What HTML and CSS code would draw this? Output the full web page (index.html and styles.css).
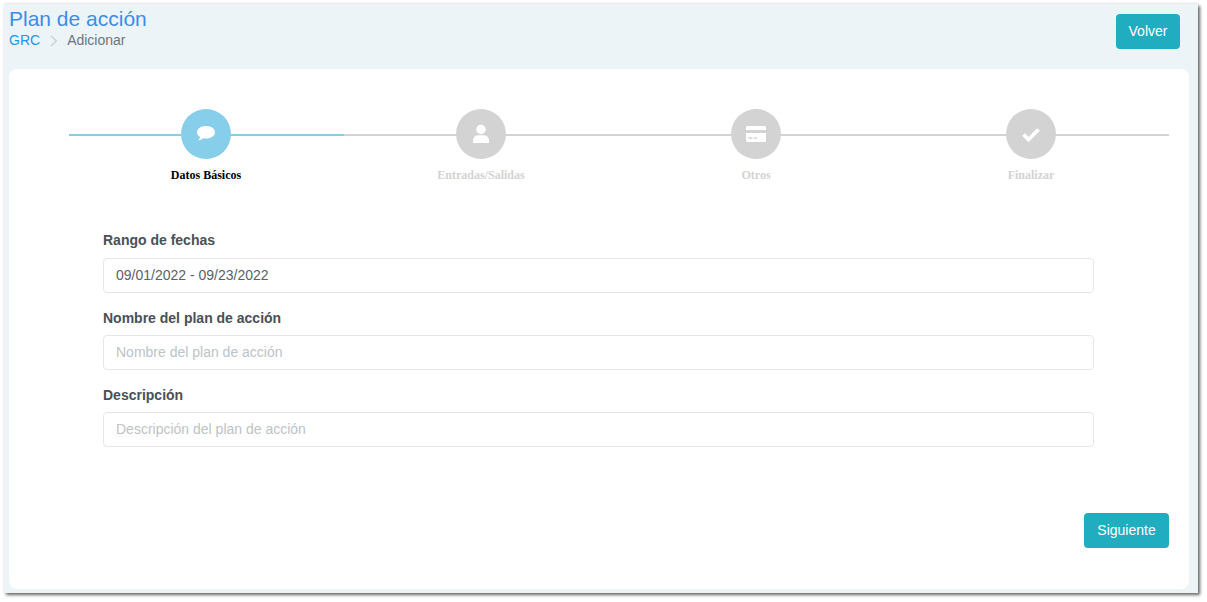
FILE: index.html
```html
<!DOCTYPE html>
<html lang="es">
<head>
<meta charset="utf-8">
<title>Plan de acción</title>
<link rel="stylesheet" href="styles.css">
</head>
<body>
<div class="shell">
  <header class="top">
    <div class="heading">
      <h1 class="title">Plan de acción</h1>
      <nav class="crumbs">
        <a class="crumb-link">GRC</a>
        <svg class="crumb-sep" width="8" height="12" viewBox="0 0 8 12"><path d="M1 1l5.500 5-5.500 5" fill="none" stroke="#c8ccd0" stroke-width="1.200"/></svg>
        <span class="crumb-current">Adicionar</span>
      </nav>
    </div>
    <button class="btn btn-back">Volver</button>
  </header>
  <main class="card">
    <ol class="stepper">
      <li class="step step-active">
        <span class="dot"><svg width="20" height="18" viewBox="0 0 20 18"><path d="M10 1C5 1 1 3.700 1 7.200c0 1.900 1.200 3.600 3.100 4.700-.3 1.300-1 2.400-2.100 3.300 2.100-.1 3.900-.8 5.300-2 .9.200 1.800.3 2.700.3 5 0 9-2.800 9-6.300S15 1 10 1z" fill="#fff"/></svg></span>
        <span class="step-label">Datos Básicos</span>
      </li>
      <li class="step">
        <span class="dot"><svg width="18" height="20" viewBox="0 0 18 20"><circle cx="9" cy="5.500" r="4.700" fill="#fff"/><path d="M1 19v-2.500C1 13.500 3.500 11.300 6 11.300h6c2.500 0 5 2.200 5 5.200V19z" fill="#fff"/></svg></span>
        <span class="step-label">Entradas/Salidas</span>
      </li>
      <li class="step">
        <span class="dot"><svg width="22" height="18" viewBox="0 0 22 18"><path d="M2.500 1h17A1.500 1.500 0 0 1 21 2.500V5H1V2.500A1.500 1.500 0 0 1 2.500 1zM1 8h20v7.500a1.500 1.500 0 0 1-1.500 1.500h-17A1.500 1.500 0 0 1 1 15.500z" fill="#fff"/><path d="M3.500 13h4M9 13h3" stroke="#d3d3d3" stroke-width="1.300"/></svg></span>
        <span class="step-label">Otros</span>
      </li>
      <li class="step">
        <span class="dot"><svg width="20" height="16" viewBox="0 0 20 16"><path d="M2.500 8.500l5 5 10-10" fill="none" stroke="#fff" stroke-width="3.800"/></svg></span>
        <span class="step-label">Finalizar</span>
      </li>
    </ol>
    <form class="form">
      <div class="field">
        <label class="field-label">Rango de fechas</label>
        <input class="input" type="text" value="09/01/2022 - 09/23/2022">
      </div>
      <div class="field">
        <label class="field-label">Nombre del plan de acción</label>
        <input class="input" type="text" placeholder="Nombre del plan de acción">
      </div>
      <div class="field">
        <label class="field-label">Descripción</label>
        <input class="input" type="text" placeholder="Descripción del plan de acción">
      </div>
    </form>
    <div class="actions">
      <button class="btn btn-next">Siguiente</button>
    </div>
  </main>
</div>
</body>
</html>
```
FILE: styles.css
```css
* { box-sizing: border-box; }
html, body { margin: 0; padding: 0; background: #fff; overflow: hidden; }
body { font-family: "Liberation Sans", Arial, sans-serif; height: 602px; }
.shell {
  margin: 4px 0 0 4px;
  width: 1194px;
  height: 589px;
  padding: 0 9px 4px 5px;
  background: #ecf4f8;
  box-shadow: 2px 2px 3px rgba(0, 0, 0, .6), 0 -1px 2px rgba(0, 0, 0, .08);
  display: flex;
  flex-direction: column;
}
.top {
  height: 65px;
  display: flex;
  justify-content: space-between;
  align-items: flex-start;
}
.title {
  margin: 3px 0 0;
  font-size: 21px;
  font-weight: 400;
  line-height: 23px;
  color: #3b8de8;
}
.crumbs {
  display: flex;
  align-items: center;
  font-size: 14px;
  line-height: 17px;
  margin-top: 2px;
}
.crumb-link { color: #2196f3; }
.crumb-sep { margin: 0 9px 0 10px; }
.crumb-current { color: #6c757d; }
.btn {
  border: 0;
  border-radius: 4px;
  background: #1fadbf;
  color: #fff;
  font-family: inherit;
  font-size: 14px;
  height: 35px;
  padding: 0 0 2px;
}
.btn-back { width: 64px; margin: 10px 9px 0 0; }
.btn-next { width: 85px; }
.card {
  flex: 1;
  background: #fff;
  border-radius: 8px;
  padding: 40px 20px 0 60px;
  display: flex;
  flex-direction: column;
}
.stepper {
  list-style: none;
  margin: 0;
  padding: 0;
  display: flex;
}
.step {
  position: relative;
  width: 275px;
  padding-right: 1px;
  display: flex;
  flex-direction: column;
  align-items: center;
}
.step::before {
  content: "";
  position: absolute;
  left: 0;
  right: 0;
  top: 25px;
  height: 2px;
  background: #d3d3d3;
}
.step-active::before { background: #87ceeb; }
.dot {
  position: relative;
  width: 50px;
  height: 50px;
  border-radius: 50%;
  background: #d3d3d3;
  display: flex;
  align-items: center;
  justify-content: center;
}
.step-active .dot { background: #87ceeb; }
.step-label {
  margin-top: 9px;
  font-family: "Liberation Serif", "Times New Roman", serif;
  font-size: 12px;
  font-weight: 700;
  line-height: 15px;
  color: #d3d3d3;
}
.step-active .step-label { color: #000; }
.form {
  margin: 49px 0 0 34px;
  width: 991px;
}
.field { margin-bottom: 17px; }
.field-label {
  display: block;
  font-size: 14px;
  font-weight: 700;
  line-height: 17px;
  color: #495057;
  margin-bottom: 9px;
}
.field + .field .field-label { margin-bottom: 8px; }
.input {
  display: block;
  width: 100%;
  height: 35px;
  border: 1px solid #e4e7ea;
  border-radius: 4px;
  padding: 0 12px 2px;
  font-family: inherit;
  font-size: 14px;
  color: #5a6168;
  background: #fff;
}
.input::placeholder { color: #bdc3c7; opacity: 1; }
.actions {
  display: flex;
  justify-content: flex-end;
  margin-top: 49px;
}
```
